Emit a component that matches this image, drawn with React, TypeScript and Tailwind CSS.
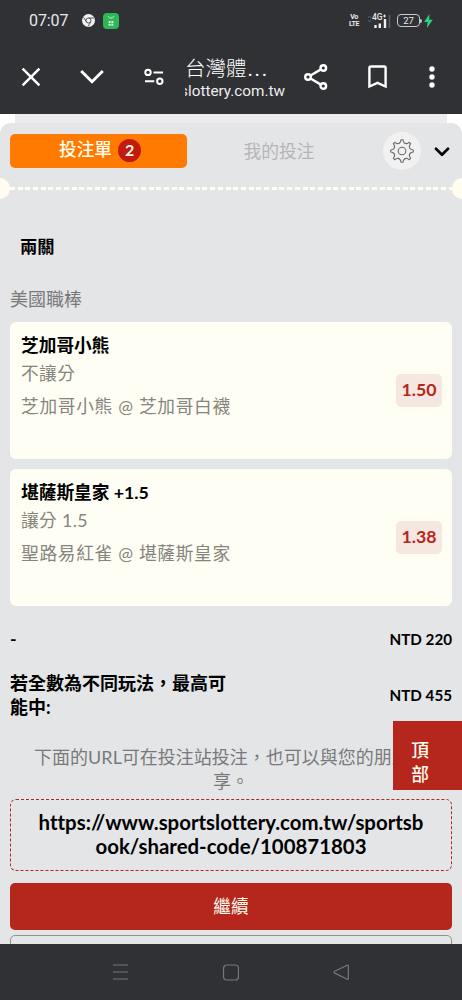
import React from 'react';

interface Bet {
  title: string;
  market: string;
  match: string;
  odds: string;
}

const bets: Bet[] = [
  { title: '芝加哥小熊', market: '不讓分', match: '芝加哥小熊 @ 芝加哥白襪', odds: '1.50' },
  { title: '堪薩斯皇家 +1.5', market: '讓分 1.5', match: '聖路易紅雀 @ 堪薩斯皇家', odds: '1.38' },
];

const polar = (r: number, deg: number) => {
  const a = (deg * Math.PI) / 180;
  return `${(12 + r * Math.sin(a)).toFixed(2)} ${(12 - r * Math.cos(a)).toFixed(2)}`;
};

// eight teeth with a hollow curve between each pair
const gearPath =
  [0, 45, 90, 135, 180, 225, 270, 315]
    .map((d, i) => `${i ? 'L' : 'M'}${polar(11.3, d - 5)}L${polar(11.3, d + 5)}L${polar(9.4, d + 9)}Q${polar(7.2, d + 22.5)} ${polar(9.4, d + 36)}`)
    .join('') + 'Z';

const StatusBar: React.FC = () => (
  <div className="flex h-10 items-center pl-[29px] pr-[29px] pt-px text-[#e8e8ea]">
    <span className="w-[53px] whitespace-nowrap font-['Roboto',sans-serif] text-[16px] leading-5 tracking-[-0.1px]">07:07</span>
    <svg className="h-[13px] w-[13px]" viewBox="0 0 13 13">
      <circle cx="6.5" cy="6.5" r="6.5" fill="#f1f1f3" />
      <circle cx="6.5" cy="6.5" r="2.5" fill="none" stroke="#55565a" strokeWidth="1" />
      <path d="M6.5 4h5.3M4.3 7.8 1.6 3.3M8.7 7.8 6.2 12.4" stroke="#55565a" strokeWidth="1" />
    </svg>
    <svg className="ml-2 h-4 w-4" viewBox="0 0 16 16">
      <rect width="16" height="16" rx="4" fill="#2eb855" />
      <path d="M5.2 3.2c.8 2.4 4.8 2.4 5.6 0" fill="none" stroke="#d9f5df" strokeWidth="1" />
      <path d="M5.6 8h2v2h-2zM8.4 8h2v2h-2zM5.6 10.8h2v2h-2zM8.4 10.8h2v2h-2z" fill="#d9f5df" />
    </svg>
    <div className="ml-auto flex items-center">
      <div className="mr-[2px] flex w-[10px] flex-col items-center font-['Roboto',sans-serif] text-[7px] font-bold leading-[7px] tracking-[-0.5px]">
        <span>Vo</span>
        <span>LTE</span>
      </div>
      <svg className="ml-1.5 h-4 w-6" viewBox="0 0 24 16">
        <path d="m1 5 1.5-2L4 5M1 7l1.5 2L4 7" stroke="#5d5e62" fill="none" />
        <text x="5" y="7.2" fill="#e8e8ea" fontFamily="Roboto, sans-serif" fontSize="8.5" fontWeight="500">4G</text>
        <path d="M16 3h3M17.5 1.5v3" stroke="#e8e8ea" />
        <path d="M8.5 12v3M12.8 10.5V15M18 6V15" stroke="#f0f0f2" strokeWidth="2.4" />
        <path d="M22.5 2v13" stroke="#5d5e62" strokeWidth="1.5" />
      </svg>
      <div className="ml-[6px] flex h-[13px] w-[23px] items-center justify-center rounded-[4px] border border-[#c9c9cc] font-['Roboto',sans-serif] text-[9.5px] leading-none">27</div>
      <div className="h-1 w-[2px] rounded-r bg-[#c9c9cc]" />
      <svg className="ml-[2px] h-[14px] w-[9px]" viewBox="0 0 9 14">
        <path d="M5.5 0 0 8h3.6L3 14l5.8-8.2H5.2z" fill="#2bd17e" />
      </svg>
    </div>
  </div>
);

const BrowserBar: React.FC = () => (
  <div className="flex h-[74px] items-center text-white">
    <svg className="ml-[21px] h-5 w-5" viewBox="0 0 20 20" fill="none" stroke="currentColor" strokeWidth="2.5">
      <path d="m1.6 1.6 16.8 16.8M18.4 1.6 1.6 18.4" />
    </svg>
    <svg className="ml-[39px] h-4 w-6" viewBox="0 0 24 16" fill="none" stroke="currentColor" strokeWidth="2.9">
      <path d="m1.2 2 10.8 10.7L22.8 2" />
    </svg>
    <svg className="ml-[40px] h-5 w-5" viewBox="0 0 20 20" fill="none" stroke="currentColor" strokeWidth="2">
      <circle cx="4" cy="5.4" r="2.7" />
      <path d="M9.5 5.4H19M1 14.2h9.3" />
      <circle cx="15.8" cy="14.2" r="2.7" />
    </svg>
    <div className="ml-[21px] w-[100px] pt-px">
      <div className="h-[27px] whitespace-nowrap font-['Noto_Sans_CJK_TC',sans-serif] text-[20.5px] font-light leading-[25px]">
        台灣體<span className="pl-px font-['Roboto',sans-serif] font-normal tracking-[1.7px]">...</span>
      </div>
      <div className="flex h-[19px] justify-end overflow-hidden whitespace-nowrap font-['Roboto',sans-serif] text-[15.3px] leading-[19px] text-[#ececee]">
        <span>slottery.com.tw</span>
      </div>
    </div>
    <svg className="ml-[19px] h-[26px] w-6" viewBox="0 0 24 26" fill="none" stroke="currentColor" strokeWidth="2.4">
      <circle cx="4" cy="13" r="2.8" />
      <circle cx="19.3" cy="4" r="2.8" />
      <circle cx="19.3" cy="22" r="2.8" />
      <path d="m6.5 11.5 10.4-6.1M6.5 14.5l10.4 6.1" />
    </svg>
    <svg className="ml-[40px] h-6 w-[19px]" viewBox="0 0 19 24" fill="none" stroke="currentColor" strokeWidth="2.4">
      <path d="M1.4 2.8c0-.8.5-1.3 1.3-1.3h13.6c.8 0 1.3.5 1.3 1.3v18.7l-8.1-3.6-8.1 3.6z" />
    </svg>
    <svg className="ml-[42px] h-[22px] w-[6px]" viewBox="0 0 6 22" fill="currentColor">
      <circle cx="3" cy="3" r="2.7" />
      <circle cx="3" cy="11" r="2.7" />
      <circle cx="3" cy="19" r="2.7" />
    </svg>
  </div>
);

const SlipTabs: React.FC = () => (
  <div className="flex h-[55px] items-center pl-[10px]">
    <div className="flex h-[34px] w-[177px] items-center justify-center rounded-[5px] bg-[#ff7a00] pl-[3px] text-[17.7px] font-medium text-[#fffdf0]">
      投注單
      <span className="ml-[6px] flex h-[23px] w-[23px] items-center justify-center rounded-full bg-[#c4190f] pb-px text-[16px] font-bold leading-none">2</span>
    </div>
    <div className="w-[184px] pt-px text-center text-[17.8px] text-[#b4b5b7]">我的投注</div>
    <div className="ml-[12px] flex h-[38px] w-[38px] items-center justify-center rounded-full bg-[#f1f1f2]">
      <svg className="h-6 w-6" viewBox="0 0 24 24" fill="none" stroke="#6b6b6d" strokeWidth="1.1" strokeLinejoin="round">
        <circle cx="12" cy="12" r="3.8" />
        <path d={gearPath} />
      </svg>
    </div>
    <svg className="ml-[13px] mt-0.5 h-[10px] w-4" viewBox="0 0 16 10" fill="none" stroke="#050505" strokeWidth="2.7" strokeLinecap="round" strokeLinejoin="round">
      <path d="m2 1.8 6 6 6-6" />
    </svg>
  </div>
);

const Perforation: React.FC = () => (
  <div className="flex h-[21px] items-center justify-between">
    <div className="h-[21px] w-[10px] rounded-r-full bg-[#fffdf0]" />
    <div className="h-[3px] flex-1 bg-[repeating-linear-gradient(90deg,#fffdf4_0_5px,transparent_5px_7.7px)]" />
    <div className="h-[21px] w-[10px] rounded-l-full bg-[#fffdf0]" />
  </div>
);

const BetCard: React.FC<{ bet: Bet }> = ({ bet }) => (
  <div className="flex h-[137px] items-center justify-between rounded-[6px] bg-[#fffef4] pl-[11px] pr-[10px]">
    <div className="h-full pt-[9px]">
      <div className="h-[29px] text-[17.7px] font-bold leading-[29px] text-black">{bet.title}</div>
      <div className="h-[29px] text-[17.7px] leading-[28px] tracking-[0.4px] text-[#85857e]">{bet.market}</div>
      <div className="mt-[3px] h-[29px] text-[17.7px] leading-[29px] tracking-[0.7px] text-[#85857e]">{bet.match}</div>
    </div>
    <div className="flex h-[33px] w-[46px] items-center justify-center rounded-[5px] bg-[#f7e7e1] text-[17.7px] font-bold text-[#b5271c]">{bet.odds}</div>
  </div>
);

const NavBar: React.FC = () => (
  <div className="flex h-14 items-center bg-[#303135]">
    <svg className="ml-[112px] h-4 w-[17px]" viewBox="0 0 17 16" stroke="#77787c" strokeWidth="1.2">
      <path d="M1 1h15M1 8h15M1 15h15" />
    </svg>
    <svg className="ml-[93px] h-[17px] w-[17px]" viewBox="0 0 17 17" fill="none" stroke="#77787c" strokeWidth="1.2">
      <rect x="1.5" y="1" width="15" height="15" rx="3.4" />
    </svg>
    <svg className="ml-[94px] h-[17px] w-[17px]" viewBox="0 0 17 17" fill="none" stroke="#77787c" strokeWidth="1.2" strokeLinejoin="round">
      <path d="M14.2 1.2 1.7 7.3c-1 .5-1 1.3 0 1.8l12.5 6.2c.7.3 1.1 0 1.1-.7V1.9c0-.7-.4-1-1.1-.7z" />
    </svg>
  </div>
);

export default function App() {
  return (
    <div className="flex h-[1000px] w-[462px] flex-col overflow-hidden bg-[#303135] font-['Lato','Noto_Sans_CJK_TC',sans-serif]">
      <StatusBar />
      <BrowserBar />

      <main className="relative flex h-[830px] flex-col overflow-hidden bg-white">
        <div className="mx-[15px] -mb-3 h-[21px] shrink-0 bg-[#ebebed]" />
        <div className="relative flex-1 rounded-t-[11px] bg-[#e4e5e7]">
          <SlipTabs />
          <Perforation />

          <div className="px-[10px]">
            <div className="mt-[33px] h-[30px] pl-[10px] text-[17.3px] font-bold leading-[30px] text-black">兩關</div>
            <div className="mt-[22px] h-[30px] text-[18px] leading-[30px] text-[#78797b]">美國職棒</div>
            <div className="mt-[8px] flex flex-col gap-[10px]">
              {bets.map((bet) => (
                <BetCard key={bet.odds} bet={bet} />
              ))}
            </div>

            <div className="mt-[21px] flex h-6 items-center justify-between font-bold text-black">
              <span className="text-[17.7px]">-</span>
              <span className="text-[15.2px]">NTD 220</span>
            </div>
            <div className="mt-[20px] flex h-12 items-center justify-between font-bold text-black">
              <p className="w-[222px] text-[18px] leading-[24px]">若全數為不同玩法，最高可能中:</p>
              <span className="text-[15.2px]">NTD 455</span>
            </div>

            <p className="mt-[26px] h-12 whitespace-nowrap text-center text-[18px] leading-[24px] text-[#78797b]">
              下面的URL可在投注站投注，也可以與您的朋友分
              <br />
              享。
            </p>
            <div className="mt-[6px] flex h-[72px] items-center justify-center rounded-[6px] border border-dashed border-[#b5271c] pb-[3px] text-center text-[20.4px] font-bold leading-[24px] text-black [font-variant-ligatures:none]">
              <span>
                https://www.sportslottery.com.tw/sportsb
                <br />
                ook/shared-code/100871803
              </span>
            </div>
            <button className="mt-[12px] flex h-[47px] w-full items-center justify-center rounded-[5px] bg-[#b5271c] pt-px text-[17.7px] text-[#fffdf0]">
              繼續
            </button>
            <div className="mt-[5px] h-[46px] rounded-[5px] border border-[#8d948d]" />
          </div>
        </div>

        <button className="absolute right-0 top-[607px] flex h-[69px] w-[69px] justify-center bg-[#b5271c] pr-[15px] pt-[18px] text-[17.7px] font-medium leading-[24px] text-[#fffdf0]">
          <span className="w-[18px] break-all">頂部</span>
        </button>
      </main>

      <NavBar />
    </div>
  );
}
